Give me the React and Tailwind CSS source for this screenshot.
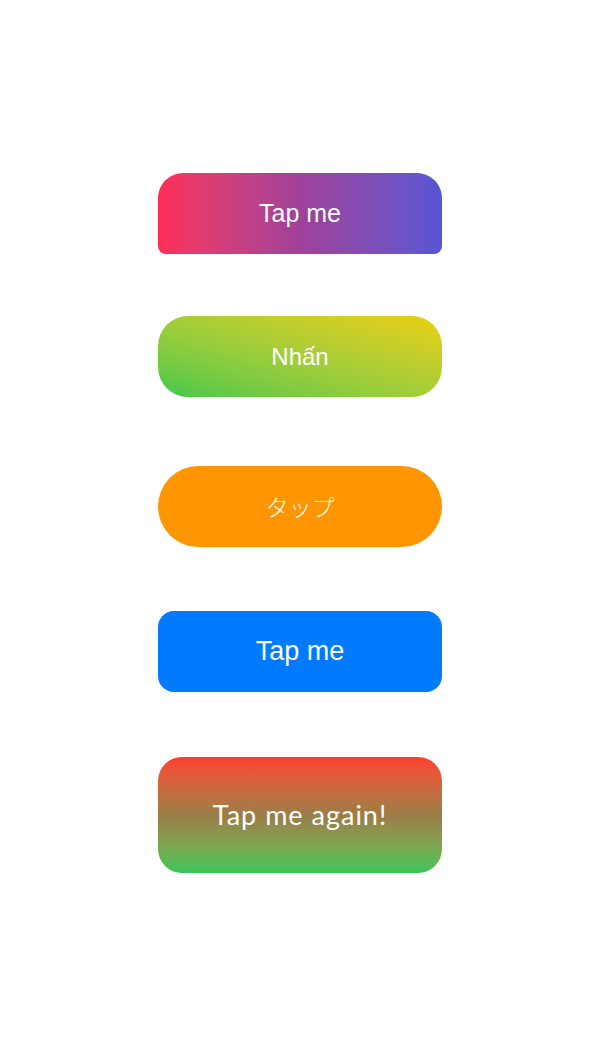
export default function App() {
  return (
    <div className="min-h-[1040px] w-[600px] bg-white flex flex-col items-center pt-[173px]">
      <button
        className="w-[284px] h-[81px] rounded-t-[25px] rounded-b-[8px] bg-linear-to-r from-[#ff2d57] via-[#a0409a] to-[#5655d4] text-white text-[25px] flex items-center justify-center font-['Liberation_Sans',Arial,sans-serif]"
      >
        Tap me
      </button>
      <button
        className="mt-[62px] w-[284px] h-[81px] rounded-[30px] bg-linear-to-tr from-[#3cc84a] to-[#eacf0a] text-white text-[24px] flex items-center justify-center font-['Liberation_Sans',Arial,sans-serif]"
      >
        Nhấn
      </button>
      <button
        className="mt-[69px] w-[284px] h-[81px] rounded-full bg-[#ff9500] text-white text-[23px] flex items-center justify-center font-['Noto_Sans_CJK_JP',sans-serif] font-light"
      >
        タップ
      </button>
      <button
        className="mt-[64px] w-[284px] h-[81px] rounded-[16px] bg-[#007aff] text-white text-[27px] flex items-center justify-center font-['Liberation_Sans',Arial,sans-serif]"
      >
        Tap me
      </button>
      <button
        className="mt-[65px] w-[284px] h-[116px] rounded-[24px] bg-linear-to-b from-[#ff3b30] via-[#9a7d48] to-[#34c759] text-white text-[27px] tracking-[1px] flex items-center justify-center font-['Lato',sans-serif]"
      >
        Tap me again!
      </button>
    </div>
  );
}
